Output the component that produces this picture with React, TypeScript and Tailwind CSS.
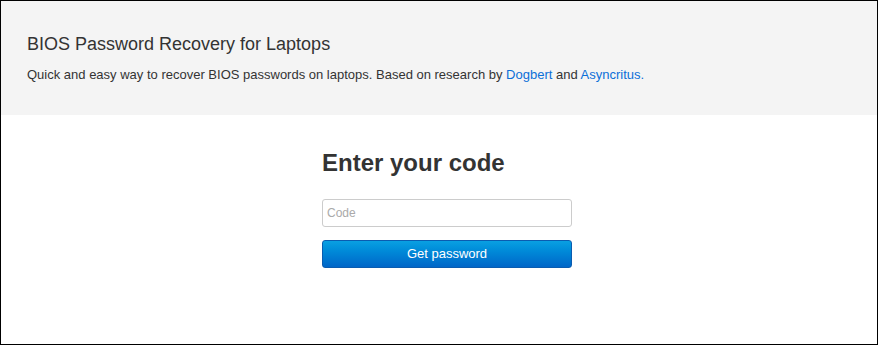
export default function App() {
  return (
    <div className="h-[345px] w-[878px] border border-black bg-white font-['Liberation_Sans',Arial,sans-serif] text-[#333]">
      <div className="h-[114px] bg-[#f4f4f4] px-[26px] pt-[32px]">
        <h1 className="text-[18px] leading-[22px] text-[#333]">BIOS Password Recovery for Laptops</h1>
        <p className="mt-[11px] text-[13px] leading-[18px]">
          Quick and easy way to recover BIOS passwords on laptops. Based on research by{" "}
          <a href="#" className="text-[#0b6fd8]">Dogbert</a> and{" "}
          <a href="#" className="text-[#0b6fd8]">Asyncritus.</a>
        </p>
      </div>
      <div className="flex justify-center pl-4 pt-[34px]">
        <div className="w-[250px]">
          <h2 className="text-[24px] font-bold leading-[28px] text-[#333]">Enter your code</h2>
          <input
            type="text"
            placeholder="Code"
            className="mt-[22px] block h-[28px] w-[250px] rounded-[3px] border border-[#ccc] bg-white px-[4px] text-[12px] text-[#333] placeholder:text-[#aaa] outline-none"
          />
          <button className="mt-[13px] block h-[28px] w-[250px] rounded-[3px] border border-[#0a5cb0] bg-gradient-to-b from-[#0aa0e2] to-[#0066c8] text-[13px] text-white">
            Get password
          </button>
        </div>
      </div>
    </div>
  );
}
